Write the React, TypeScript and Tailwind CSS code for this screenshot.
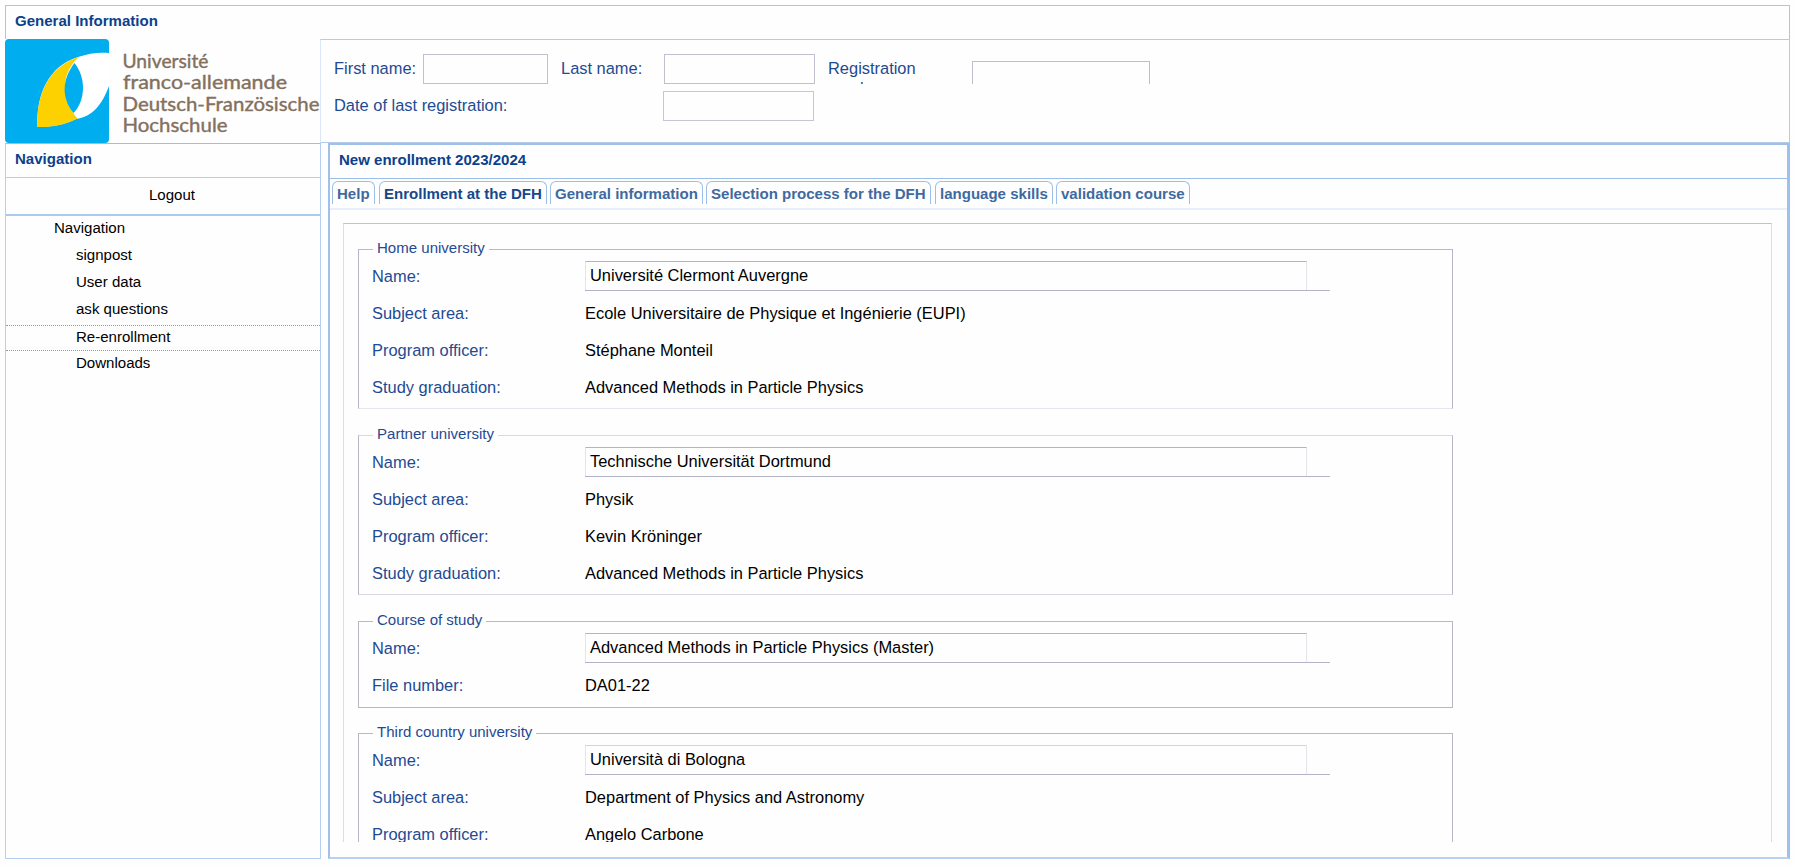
import React from "react";

type Row = { label: string; value: string; boxed?: boolean };
type Group = { legend: string; rows: Row[]; frame: string; box: string };

const groups: Group[] = [
  {
    legend: "Home university",
    frame: "h-[160px] border-t-[#b9b9cb] border-b-[#e6e6ef]",
    box: "border-t-[#b3b3c8]",
    rows: [
      { label: "Name:", value: "Université Clermont Auvergne", boxed: true },
      { label: "Subject area:", value: "Ecole Universitaire de Physique et Ingénierie (EUPI)" },
      { label: "Program officer:", value: "Stéphane Monteil" },
      { label: "Study graduation:", value: "Advanced Methods in Particle Physics" },
    ],
  },
  {
    legend: "Partner university",
    frame: "h-[160px] border-t-[#d9d9e0] border-b-[#d9d9e2]",
    box: "border-t-[#b3b3c8]",
    rows: [
      { label: "Name:", value: "Technische Universität Dortmund", boxed: true },
      { label: "Subject area:", value: "Physik" },
      { label: "Program officer:", value: "Kevin Kröninger" },
      { label: "Study graduation:", value: "Advanced Methods in Particle Physics" },
    ],
  },
  {
    legend: "Course of study",
    frame: "h-[87px] border-t-[#b9b9cb] border-b-[#b6b6c6]",
    box: "border-t-[#b3b3c8]",
    rows: [
      { label: "Name:", value: "Advanced Methods in Particle Physics (Master)", boxed: true },
      { label: "File number:", value: "DA01-22" },
    ],
  },
  {
    legend: "Third country university",
    frame: "-mt-[1px] h-[160px] border-t-[#b9b9cb] border-b-[#b9b9cb]",
    box: "border-t-[#d3d3dd]",
    rows: [
      { label: "Name:", value: "Università di Bologna", boxed: true },
      { label: "Subject area:", value: "Department of Physics and Astronomy" },
      { label: "Program officer:", value: "Angelo Carbone" },
    ],
  },
];

const tabs = [
  { name: "Help", size: "w-[43px] mr-[4px]" },
  { name: "Enrollment at the DFH", size: "w-[168px] mr-[3px]" },
  { name: "General information", size: "w-[153px] mr-[3px]" },
  { name: "Selection process for the DFH", size: "w-[225px] mr-[4px]" },
  { name: "language skills", size: "w-[118px] mr-[3px]" },
  { name: "validation course", size: "w-[134px]" },
];

const navItems = ["signpost", "User data", "ask questions", "Re-enrollment", "Downloads"];

function Logo() {
  return (
    <svg width="315" height="104" viewBox="0 0 315 104" className="block shrink-0">
      <rect width="104" height="104" rx="4" fill="#00aeef" />
      <path d="M32.5 88 C31 55 44 27 73 18 C84 14 95 13 104 14 V47 C97 66 87 78 71 80 C60 86 45 88 32.5 88Z" fill="#fff" />
      <path d="M32.5 88 C31 55 44 27 75 17.5 C56 32 55 60 72.500 79.500 C60 86 46 88.500 32.5 88Z" fill="#fdd000" />
      <path d="M69.500 24 C81 38 81 61 68.500 74 C56 59 57 40 69.500 24Z" fill="#00aeef" />
      <g fill="#83705d" stroke="#83705d" strokeWidth="0.4" fontFamily="Lato, sans-serif" fontSize="20">
        <text x="117.500" y="28.500" textLength="86" lengthAdjust="spacingAndGlyphs">Université</text>
        <text x="118" y="49.500" textLength="164" lengthAdjust="spacingAndGlyphs">franco-allemande</text>
        <text x="117.500" y="71.500" textLength="197" lengthAdjust="spacingAndGlyphs">Deutsch-Französische</text>
        <text x="117.500" y="93" textLength="105" lengthAdjust="spacingAndGlyphs">Hochschule</text>
      </g>
    </svg>
  );
}

function FieldGroup({ legend, rows, frame, box }: Group) {
  return (
    <section className="w-[1095px] shrink-0">
      <div className={`border border-x-[#b6b6c9] ${frame}`}>
        <h2 className="-mt-[11px] ml-[14px] w-fit bg-[#fefefe] px-[4px] text-[15.04px] leading-[18px]">{legend}</h2>
        <dl className="pl-[13px] pt-[4px] text-[16.43px]">
          {rows.map((r) => (
            <div key={r.label} className="flex h-[37px] items-start">
              <dt className="w-[213px] shrink-0 leading-[30px]">{r.label}</dt>
              {r.boxed ? (
                <dd className="w-[745px] border-b border-b-[#b3b3c8] text-black">
                  <div className={`h-[29px] w-[722px] border-x border-t border-x-[#e4e4ea] pl-[4px] leading-[27px] ${box}`}>
                    {r.value}
                  </div>
                </dd>
              ) : (
                <dd className="leading-[30px] text-black">{r.value}</dd>
              )}
            </div>
          ))}
        </dl>
      </div>
    </section>
  );
}

export default function App() {
  return (
    <div className="flex h-[866px] w-[1795px] flex-col overflow-hidden bg-[#fefefe] pl-[5px] pt-[5px] font-['Liberation_Sans',Arial,sans-serif] text-[15.04px] text-[#1f4a94]">
      <header className="w-[1785px] shrink-0">
        <div className="h-[34px] border-x border-t border-[#abc6ea] pl-[9px] font-bold leading-[30px] text-[#0b418c]">
          General Information
        </div>
        <div className="flex h-[104px]">
          <Logo />
          <div className="h-[104px] grow border border-[#b4cbea] border-l-[#d9e7f8] pl-[13px] pt-[13px] text-[16.43px]">
            <div className="flex h-[31px] overflow-hidden">
              <label className="w-[89px] leading-[30px]">First name:</label>
              <div className="mt-[1px] h-[30px] w-[125px] border border-[#c0c0d1]" />
              <label className="ml-[13px] w-[103px] leading-[30px]">Last name:</label>
              <div className="mt-[1px] h-[30px] w-[151px] border border-[#c0c0d1]" />
              <label className="ml-[13px] w-[144px] pt-[5px] leading-[20px]">
                Registration
                <br />
                number:
              </label>
              <div className="mt-[8px] h-[30px] w-[178px] border border-[#bdbdd0]" />
            </div>
            <div className="mt-[6px] flex">
              <label className="w-[329px] leading-[30px]">Date of last registration:</label>
              <div className="mt-[1px] h-[30px] w-[151px] border border-[#c5c5d5]" />
            </div>
          </div>
        </div>
      </header>

      <div className="flex h-[716px] shrink-0">
        <nav className="w-[316px] shrink-0 border border-[#b5cff0] border-t-[#9dbde6] text-black">
          <h2 className="h-[34px] border-b border-[#b5cff0] pl-[9px] font-bold leading-[30px] text-[#0b418c]">Navigation</h2>
          <div className="h-[38px] border-b-2 border-[#abc9ee] pl-[18px] text-center leading-[34px]">Logout</div>
          <div className="pl-[48px] leading-[24px]">Navigation</div>
          <ul className="pt-[3px]">
            {navItems.map((n) => (
              <li
                key={n}
                className={
                  n === "Re-enrollment"
                    ? "mt-[1px] h-[26px] border-y border-dotted border-[#999] pl-[70px] leading-[22px]"
                    : "h-[27px] pl-[70px] leading-[24px]"
                }
              >
                {n}
              </li>
            ))}
          </ul>
        </nav>

        <main className="ml-[7px] flex w-[1462px] flex-col border-2 border-r-[3px] border-[#9fc0ea] border-b-[#b8d3f2]">
          <h1 className="h-[34px] shrink-0 border-b border-[#9cbfe9] pl-[9px] font-bold leading-[30px] text-[#0b418c]">
            New enrollment 2023/2024
          </h1>
          <div className="flex h-[31px] shrink-0 border-b-2 border-[#e8effa] pl-[2px] pt-[2px] font-bold text-[#3f6a9f]">
            {tabs.map((t) => (
              <div
                key={t.name}
                className={`h-[23px] shrink-0 whitespace-nowrap rounded-t-[6px] border border-b-0 border-[#9bbfe8] pl-[4px] leading-[24px] ${t.size} ${
                  t.name.startsWith("Enrollment") ? "text-[#17478b]" : ""
                }`}
              >
                {t.name}
              </div>
            ))}
          </div>
          <div className="ml-[13px] mt-[13px] flex h-[619px] w-[1429px] flex-col gap-[26px] overflow-hidden border border-b-0 border-[#d3deef] border-t-[#a9c8ee] pl-[14px] pt-[25px]">
            {groups.map((g) => (
              <FieldGroup key={g.legend} {...g} />
            ))}
          </div>
        </main>
      </div>
    </div>
  );
}
